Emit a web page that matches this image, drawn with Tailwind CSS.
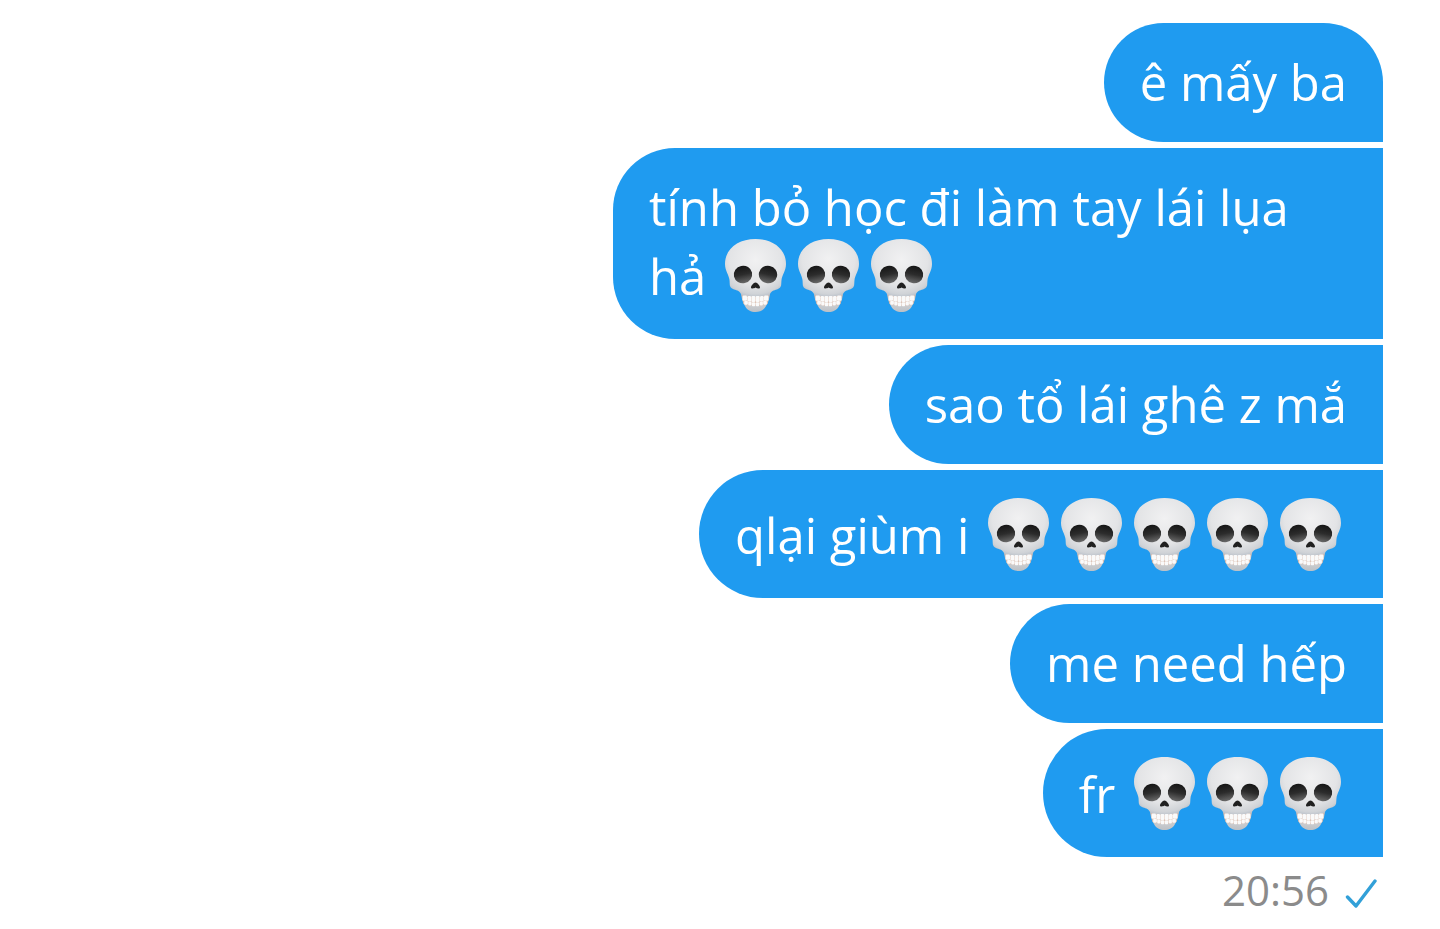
<!DOCTYPE html>
<html lang="vi">
<head>
    <meta charset="UTF-8">
    <meta name="viewport" content="width=device-width, initial-scale=1.0">
    <title>Tin nhắn</title>
    <script src="https://cdn.jsdelivr.net/npm/@tailwindcss/browser@4"></script>
</head>
<body class="bg-white font-['Open_Sans','Noto_Sans',sans-serif]">
    <!-- skull emoji -->
    <svg class="absolute w-0 h-0" aria-hidden="true">
        <defs>
            <radialGradient id="bone" cx="0.5" cy="0.35" r="0.66">
                <stop offset="0" stop-color="#f1f1f2"/>
                <stop offset="0.65" stop-color="#e3e4e6"/>
                <stop offset="0.88" stop-color="#d0d3d7"/>
                <stop offset="1" stop-color="#b4bcc6"/>
            </radialGradient>
            <linearGradient id="socket" x1="0" y1="0" x2="0" y2="1">
                <stop offset="0" stop-color="#151515"/>
                <stop offset="0.5" stop-color="#2c2c2c"/>
                <stop offset="1" stop-color="#6a6a6a"/>
            </linearGradient>
            <linearGradient id="jaw" x1="0" y1="0" x2="0" y2="1">
                <stop offset="0" stop-color="#a9abae"/>
                <stop offset="0.7" stop-color="#c9cbce"/>
                <stop offset="1" stop-color="#bcc0c5"/>
            </linearGradient>
        </defs>
        <symbol id="skull" viewBox="0 0 73 75">
            <path d="M22 54C22 60 24 65 26 68C28 72 32 74 36.500 74C41 74 45 72 47 68C49 65 51 60 51 54Z" fill="url(#jaw)"/>
            <path d="M36.500 1C54 1 67 11 67 26C67 33 63 37 62.500 42C62 47 63 49 59 51C56 52.500 53 52 51 56C50 59 49 60 46 60H27C24 60 23 59 22 56C20 52 17 52.500 14 51C10 49 11 47 10.500 42C10 37 6 33 6 26C6 11 19 1 36.500 1Z" fill="url(#bone)"/>
            <path d="M23 57Q36.500 61 50 57L48.500 66Q36.500 70 24.500 66Z" fill="#d8bcae"/>
            <g fill="#fafafa">
                <rect x="23.500" y="57.500" width="4.500" height="5.200" rx="1.200"/>
                <rect x="28.400" y="58" width="3.700" height="5.500" rx="1.200"/>
                <rect x="32.400" y="58" width="4" height="6" rx="1"/>
                <rect x="36.700" y="58" width="4" height="6" rx="1"/>
                <rect x="41" y="58" width="3.700" height="5.500" rx="1.200"/>
                <rect x="45" y="57.500" width="4.500" height="5.200" rx="1.200"/>
                <rect x="25.200" y="62.800" width="3.700" height="4" rx="1.200"/>
                <rect x="29.200" y="63.600" width="3.300" height="4" rx="1"/>
                <rect x="32.800" y="64.200" width="3.500" height="4" rx="1"/>
                <rect x="36.700" y="64.200" width="3.500" height="4" rx="1"/>
                <rect x="40.600" y="63.600" width="3.300" height="4" rx="1"/>
                <rect x="44.200" y="62.800" width="3.700" height="4" rx="1.200"/>
            </g>
            <ellipse cx="24" cy="36.500" rx="9.200" ry="8.800" transform="rotate(-12 24 36.500)" fill="url(#socket)"/>
            <ellipse cx="49" cy="36.500" rx="9.200" ry="8.800" transform="rotate(12 49 36.500)" fill="url(#socket)"/>
            <path d="M36.500 44.500C38.500 44.500 41 48 41 49.500C41 51 38 50.500 36.500 49.500C35 50.500 32 51 32 49.500C32 48 34.500 44.500 36.500 44.500Z" fill="#202020"/>
        </symbol>
    </svg>

    <main class="flex flex-col items-end gap-[6px] pt-[23px] pr-[57px] text-[49px] leading-[63px] font-[450] text-white">
        <p class="bg-[#1f9bf0] rounded-[60px] rounded-br-none px-9 py-7">ê mấy ba</p>
        <p class="max-w-[770px] bg-[#1f9bf0] rounded-l-[62px] px-9 py-7">tính bỏ học đi làm tay lái lụa hả <span class="whitespace-nowrap" role="img" aria-label="đầu lâu"><svg class="inline-block w-[73px] h-[75px] -mt-px -mb-[2px] align-[-16px]"><use href="#skull"/></svg><svg class="inline-block w-[73px] h-[75px] -mt-px -mb-[2px] align-[-16px]"><use href="#skull"/></svg><svg class="inline-block w-[73px] h-[75px] -mt-px -mb-[2px] align-[-16px]"><use href="#skull"/></svg></span></p>
        <p class="bg-[#1f9bf0] rounded-l-[60px] px-9 py-7">sao tổ lái ghê z mắ</p>
        <p class="bg-[#1f9bf0] rounded-l-[64px] px-9 py-7">qlại giùm i <span class="whitespace-nowrap" role="img" aria-label="đầu lâu"><svg class="inline-block w-[73px] h-[75px] -mt-px -mb-[2px] align-[-16px]"><use href="#skull"/></svg><svg class="inline-block w-[73px] h-[75px] -mt-px -mb-[2px] align-[-16px]"><use href="#skull"/></svg><svg class="inline-block w-[73px] h-[75px] -mt-px -mb-[2px] align-[-16px]"><use href="#skull"/></svg><svg class="inline-block w-[73px] h-[75px] -mt-px -mb-[2px] align-[-16px]"><use href="#skull"/></svg><svg class="inline-block w-[73px] h-[75px] -mt-px -mb-[2px] align-[-16px]"><use href="#skull"/></svg></span></p>
        <p class="bg-[#1f9bf0] rounded-l-[60px] px-9 py-7">me need hếp</p>
        <p class="bg-[#1f9bf0] rounded-l-[64px] px-9 py-7">fr <span class="whitespace-nowrap" role="img" aria-label="đầu lâu"><svg class="inline-block w-[73px] h-[75px] -mt-px -mb-[2px] align-[-16px]"><use href="#skull"/></svg><svg class="inline-block w-[73px] h-[75px] -mt-px -mb-[2px] align-[-16px]"><use href="#skull"/></svg><svg class="inline-block w-[73px] h-[75px] -mt-px -mb-[2px] align-[-16px]"><use href="#skull"/></svg></span></p>
        <div class="flex items-center gap-4 pr-[6px] text-[42px] leading-[54px] font-normal text-[#8b8b8b]">
            <time datetime="20:56">20:56</time>
            <svg class="w-8 h-8 mt-2" viewBox="0 0 32 32" fill="none" stroke="#32a0d8" stroke-width="3.400" stroke-linecap="round" stroke-linejoin="round" role="img" aria-label="Đã gửi">
                <path d="M2.500 19L11 28L30 3"/>
            </svg>
        </div>
    </main>
</body>
</html>
